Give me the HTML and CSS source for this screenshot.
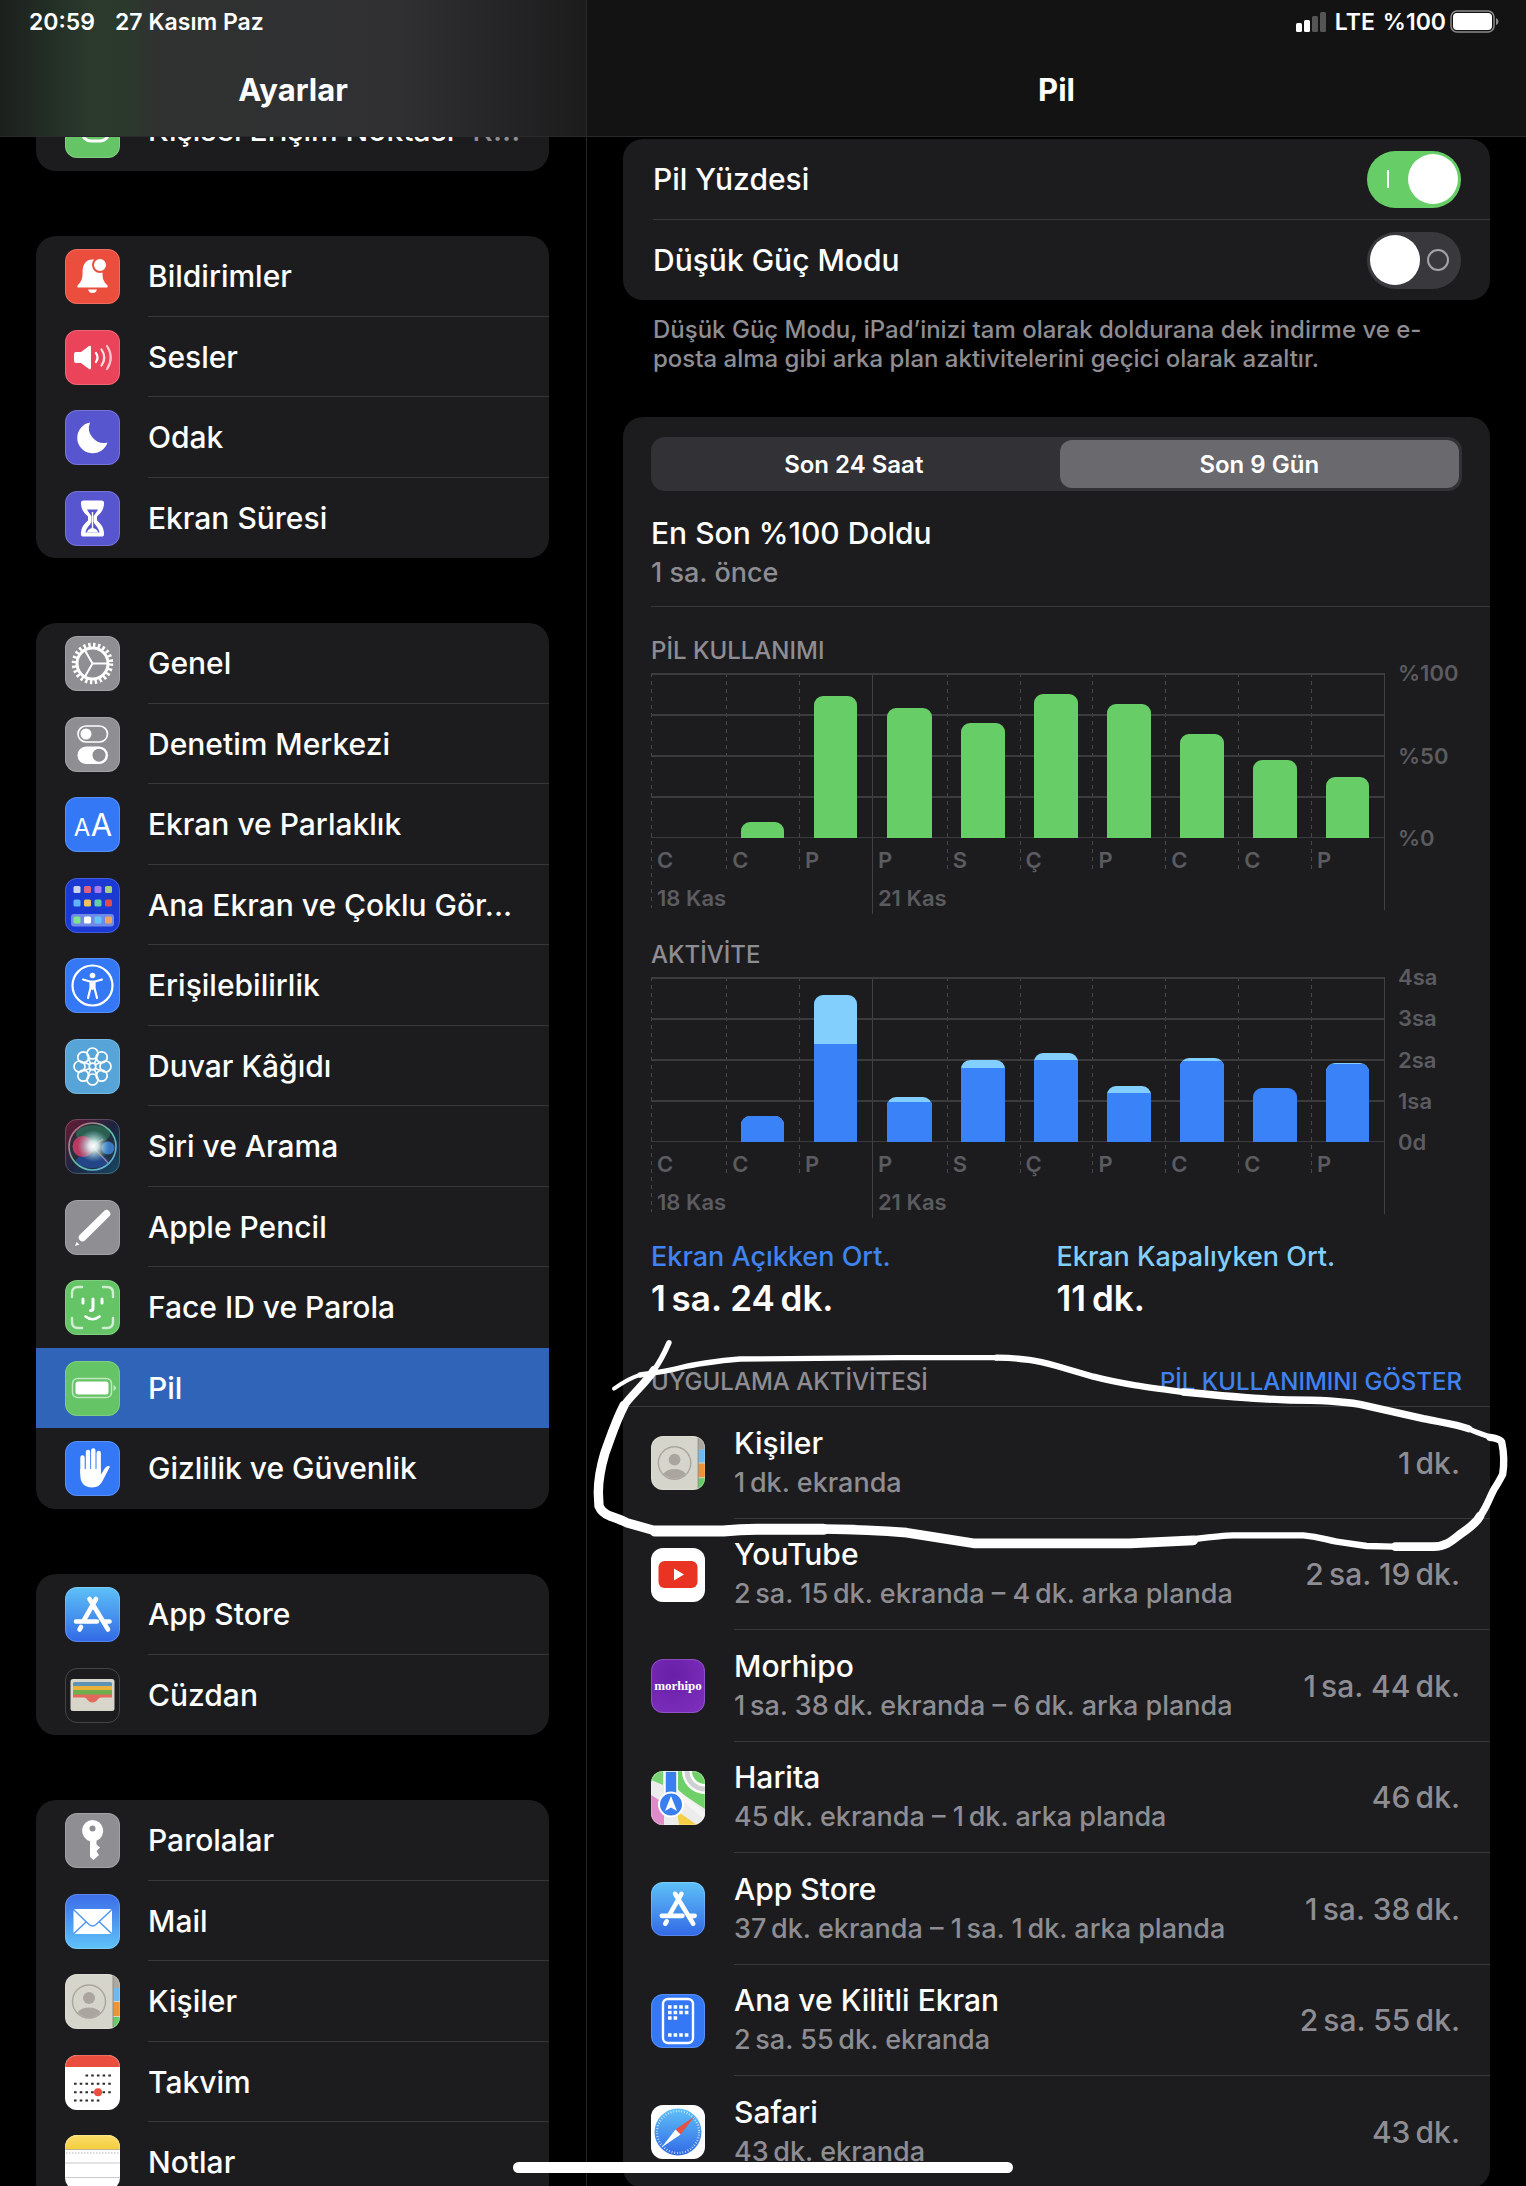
FILE: index.html
```html
<!DOCTYPE html>
<html lang="tr">

<head>
  <meta charset="utf-8">
  <title>Ayarlar</title>
  <link rel="stylesheet" href="styles.css">
</head>

<body>
  <!-- icons used more than once -->
  <svg class="defs" aria-hidden="true">
    <defs>
      <linearGradient id="storeBg" x1="0" y1="0" x2="0" y2="1">
        <stop offset="0" stop-color="#5ec1f7" />
        <stop offset="1" stop-color="#3269e6" />
      </linearGradient>
      <linearGradient id="mailBg" x1="0" y1="0" x2="0" y2="1">
        <stop offset="0" stop-color="#3c6ce8" />
        <stop offset="1" stop-color="#5fc3f8" />
      </linearGradient>
      <linearGradient id="notesBg" x1="0" y1="0" x2="0" y2="1">
        <stop offset="0" stop-color="#fade6b" />
        <stop offset="1" stop-color="#f5cd3f" />
      </linearGradient>
      <linearGradient id="siriBg" x1="0" y1="0" x2="1" y2="1">
        <stop offset="0" stop-color="#6b1b35" />
        <stop offset="0.5" stop-color="#1d2440" />
        <stop offset="1" stop-color="#174a63" />
      </linearGradient>
      <radialGradient id="siriGlow">
        <stop offset="0" stop-color="#fff" />
        <stop offset="0.3" stop-color="#e4f6f8" stop-opacity="0.9" />
        <stop offset="1" stop-color="#8fd0d8" stop-opacity="0" />
      </radialGradient>
      <linearGradient id="siriRing" x1="0" y1="0" x2="1" y2="1">
        <stop offset="0" stop-color="#e0527c" />
        <stop offset="0.5" stop-color="#63c29f" />
        <stop offset="1" stop-color="#5aa9f0" />
      </linearGradient>
    </defs>
    <symbol id="appstore" viewBox="0 0 55 55">
      <rect width="55" height="55" fill="url(#storeBg)" />
      <g stroke="#fff" stroke-width="4.6" stroke-linecap="round" fill="none">
        <path d="M31 12 18.500 34M24.500 12 43 42.500M11 34.500H32M39 34.500H44.500M16 40 14.500 42.500" />
      </g>
    </symbol>
    <symbol id="contacts" viewBox="0 0 55 55">
      <rect width="55" height="55" fill="#d6d5cb" />
      <rect x="48" width="7" height="14" fill="#aaa89f" />
      <rect x="48" y="14" width="7" height="13" fill="#6db9f0" />
      <rect x="48" y="28" width="7" height="14" fill="#ee9434" />
      <rect x="48" y="43" width="7" height="12" fill="#65cd63" />
      <path d="M48 0V55" stroke="#8f8d84" />
      <circle cx="24" cy="27.500" r="16.500" fill="none" stroke="#aaa69f" stroke-width="1.400" />
      <circle cx="24" cy="24" r="6" fill="#aaa69f" />
      <path d="M12.500 38.500C15 35 19 33.500 24 33.500S33 35 35.500 38.500C32 42 28 43.500 24 43.500S16 42 12.500 38.500z" fill="#aaa69f" />
    </symbol>
  </svg>

  <div class="settings">
    <aside class="sidebar">
      <header class="bar bar-left">
        <div class="status"><span>20:59</span><span>27 Kasım Paz</span></div>
        <h1>Ayarlar</h1>
      </header>

      <nav class="menu">
        <div class="card first">
          <a class="item" href="#hotspot">
            <svg class="icon green" viewBox="0 0 55 55"><g fill="none" stroke="#fff" stroke-width="3"><rect x="17" y="8" width="26" height="20" rx="9" /><rect x="17" y="18" width="27" height="20" rx="9" /></g></svg>
            <span class="label">Kişisel Erişim Noktası <span class="detail">K...</span></span>
          </a>
        </div>

        <div class="card">
          <a class="item" href="#notifications">
            <svg class="icon orange" viewBox="0 0 55 55"><path d="M12.500 36.500C16.500 32.500 17.500 30 17.500 24 17.500 15 21 10.500 27.500 10.500S37.500 15 37.500 24C37.500 30 38.500 32.500 42.500 36.500 43 38 42.500 38.500 41.500 38.500H13.500C12.500 38.500 12 38 12.500 36.500zM23 40.500H32Q31 44 27.500 44T23 40.500z" fill="#fff" /><circle cx="35" cy="16" r="7" fill="#fff" stroke="#eb4e3d" stroke-width="2" /></svg>
            <span class="label">Bildirimler</span>
          </a>
          <a class="item" href="#sounds">
            <svg class="icon pink" viewBox="0 0 55 55"><path d="M9 24q0-2 2-2h5l8-6q2-1 2 1v21q0 2-2 1l-8-6h-5q-2 0-2-2z" fill="#fff" /><g fill="none" stroke="#fff" stroke-width="2.200" stroke-linecap="round"><path d="M31 23q3 4.500 0 9" /><path d="M36.500 19.500q5.500 8 0 16" opacity=".85" /><path d="M42 16q7.500 11.500 0 23" opacity=".7" /></g></svg>
            <span class="label">Sesler</span>
          </a>
          <a class="item" href="#focus">
            <svg class="icon indigo" viewBox="0 0 55 55"><path d="M25 12.500A15.500 15.500 0 1 0 42.500 32.500 15 15 0 0 1 25 12.500z" fill="#fff" /></svg>
            <span class="label">Odak</span>
          </a>
          <a class="item" href="#screentime">
            <svg class="icon indigo" viewBox="0 0 55 55"><path d="M18.500 9.500h18q3 0 2.500 3.500c-.5 7-4 9.500-7 12.500v4c3 3 6.500 5.500 7 12.500q.5 3.500-2.500 3.500h-18q-3 0-2.500-3.500c.5-7 4-9.500 7-12.500v-4c-3-3-6.500-5.500-7-12.500q-.5-3.500 2.500-3.500z" fill="#fff" /><path d="M22 18.500h11c-1 2.500-3.500 4.500-4.500 7v5c1 3.500 5 5.500 6 11H20.500c1-5.500 5-7.500 6-11v-5c-1-2.500-3.500-4.500-4.500-7z" fill="#5856ce" /><path d="M26.800 21h1.400v16c2.500 1 4.500 2 5 4.500H21.800c.5-2.500 2.500-3.500 5-4.500z" fill="#fff" /></svg>
            <span class="label">Ekran Süresi</span>
          </a>
        </div>

        <div class="card">
          <a class="item" href="#general">
            <svg class="icon gray" viewBox="0 0 55 55"><g fill="none" stroke="#fff"><circle cx="27.500" cy="27.500" r="15.500" stroke-width="3" /><circle cx="27.500" cy="27.500" r="18.500" stroke-width="4.500" stroke-dasharray="2.400 2.443" /><path d="M27.500 27.500H42M27.500 27.500 20 14.500M27.500 27.500 20 40.500" stroke-width="2" /></g></svg>
            <span class="label">Genel</span>
          </a>
          <a class="item" href="#control">
            <svg class="icon gray" viewBox="0 0 55 55"><rect x="13" y="9" width="29.500" height="16" rx="8" fill="none" stroke="#fff" stroke-width="1.600" /><circle cx="21" cy="17" r="5.500" fill="#fff" /><rect x="12.500" y="29.500" width="30.500" height="17.500" rx="8.700" fill="#fff" /><circle cx="34" cy="38.200" r="6.500" fill="#8e8e93" /></svg>
            <span class="label">Denetim Merkezi</span>
          </a>
          <a class="item" href="#display">
            <svg class="icon blue" viewBox="0 0 55 55"><text class="glyph" x="17" y="39" font-size="24">A</text><text class="glyph" x="36.500" y="39" font-size="31">A</text></svg>
            <span class="label">Ekran ve Parlaklık</span>
          </a>
          <a class="item" href="#home">
            <svg class="icon royal" viewBox="0 0 55 55">
              <rect x="6" y="36" width="43" height="12.500" rx="3" fill="#6f8ae8" />
              <rect x="8.500" y="8" width="7" height="7" rx="1.500" fill="#cdd3e8" /><rect x="19" y="8" width="7" height="7" rx="1.500" fill="#e0607f" /><rect x="29.500" y="8" width="7" height="7" rx="1.500" fill="#a678f0" /><rect x="40" y="8" width="7" height="7" rx="1.500" fill="#a5d07a" />
              <rect x="8.500" y="21.500" width="7" height="7" rx="1.500" fill="#5db5f7" /><rect x="19" y="21.500" width="7" height="7" rx="1.500" fill="#efc25e" /><rect x="29.500" y="21.500" width="7" height="7" rx="1.500" fill="#62cfa5" /><rect x="40" y="21.500" width="7" height="7" rx="1.500" fill="#df4c4c" />
              <rect x="8.500" y="38.500" width="7" height="7" rx="1.500" fill="#7fe38c" /><rect x="19" y="38.500" width="7" height="7" rx="1.500" fill="#fff" /><rect x="29.500" y="38.500" width="7" height="7" rx="1.500" fill="#62c3fa" /><rect x="40" y="38.500" width="7" height="7" rx="1.500" fill="#f0a266" />
            </svg>
            <span class="label">Ana Ekran ve Çoklu Gör...</span>
          </a>
          <a class="item" href="#accessibility">
            <svg class="icon blue" viewBox="0 0 55 55"><circle cx="27.500" cy="27.500" r="20" fill="none" stroke="#fff" stroke-width="2.200" /><circle cx="27.500" cy="17.500" r="2.800" fill="#fff" /><path d="M18 21.500 25 23.500H30L37 21.500M27.500 24V31M25.500 24V30L23 40M29.500 24V30L32 40" fill="none" stroke="#fff" stroke-width="2.200" stroke-linecap="round" stroke-linejoin="round" /></svg>
            <span class="label">Erişilebilirlik</span>
          </a>
          <a class="item" href="#wallpaper">
            <svg class="icon sky" viewBox="0 0 55 55"><g fill="none" stroke="#fff" stroke-width="1.700"><circle cx="27.500" cy="14.500" r="5.500" /><circle cx="36.700" cy="18.300" r="5.500" /><circle cx="40.500" cy="27.500" r="5.500" /><circle cx="36.700" cy="36.700" r="5.500" /><circle cx="27.500" cy="40.500" r="5.500" /><circle cx="18.300" cy="36.700" r="5.500" /><circle cx="14.500" cy="27.500" r="5.500" /><circle cx="18.300" cy="18.300" r="5.500" /><path d="M25.500 24.500 23 18.500M29.500 24.500 32 18.500M30.500 25.500 36.500 23M30.500 29.500 36.500 32M29.500 30.500 32 36.500M25.500 30.500 23 36.500M24.500 29.500 18.500 32M24.500 25.500 18.500 23" /><circle cx="27.500" cy="27.500" r="3.300" /></g></svg>
            <span class="label">Duvar Kâğıdı</span>
          </a>
          <a class="item" href="#siri">
            <svg class="icon" viewBox="0 0 55 55"><rect width="55" height="55" fill="url(#siriBg)" /><circle cx="27.500" cy="27.500" r="23" fill="#27333b" opacity=".7" /><ellipse cx="28" cy="15" rx="17" ry="9" fill="#2d7a5c" opacity=".65" /><ellipse cx="27" cy="42" rx="16" ry="7" fill="#2450a8" opacity=".7" /><circle cx="18" cy="27.500" r="10.500" fill="#d23c68" opacity=".85" /><circle cx="43" cy="29" r="6.500" fill="#3b86d8" opacity=".85" /><path d="M28 28 44 45M28 27 38 20" stroke="#e9a9b4" stroke-width="1.200" opacity=".6" /><circle cx="28.500" cy="27" r="16" fill="url(#siriGlow)" /><circle cx="27.500" cy="27.500" r="23.500" fill="none" stroke="url(#siriRing)" stroke-width="1.600" /></svg>
            <span class="label">Siri ve Arama</span>
          </a>
          <a class="item" href="#pencil">
            <svg class="icon gray" viewBox="0 0 55 55"><path d="M17.500 37.500 41.500 13.800" stroke="#fff" stroke-width="7.500" stroke-linecap="round" /><path d="M11.500 42 14.500 44.500 10 46z" fill="#fff" /></svg>
            <span class="label">Apple Pencil</span>
          </a>
          <a class="item last" href="#faceid">
            <svg class="icon green" viewBox="0 0 55 55"><g fill="none" stroke="#fff" stroke-linecap="round"><path d="M7 17V13Q7 7 13 7H17M38 7H42Q48 7 48 13V17M48 38V42Q48 48 42 48H38M17 48H13Q7 48 7 42V38" stroke-width="2.400" opacity=".7" /><path d="M18 19V23M37 19V23M28 19V28.500Q28 30.500 25.500 30.500" stroke-width="3" /><path d="M20.500 36.500Q27.500 42 34.500 36.500" stroke-width="2.600" /></g></svg>
            <span class="label">Face ID ve Parola</span>
          </a>
          <a class="item selected" href="#battery" aria-current="page">
            <svg class="icon green" viewBox="0 0 55 55"><rect x="7.500" y="17.500" width="39" height="19" rx="5" fill="none" stroke="#fff" stroke-width="1.500" opacity=".6" /><rect x="10.500" y="20.500" width="33" height="13" rx="2.500" fill="#fff" /><path d="M48.500 24Q51 25 51 27T48.500 30z" fill="#fff" opacity=".6" /></svg>
            <span class="label">Pil</span>
          </a>
          <a class="item" href="#privacy">
            <svg class="icon blue" viewBox="0 0 55 55"><g stroke="#fff" stroke-width="4.400" stroke-linecap="round" fill="none"><path d="M17.500 16.500V32M23 11V30M28.300 9.500V30M33.700 12V30" /></g><path d="M15.300 28H35.900V33.500L40 27Q42.500 24 45 25.500L38 39Q35 46.500 27 46.500 15.300 46 15.300 34z" fill="#fff" /></svg>
            <span class="label">Gizlilik ve Güvenlik</span>
          </a>
        </div>

        <div class="card">
          <a class="item" href="#appstore-settings">
            <svg class="icon"><use href="#appstore" /></svg>
            <span class="label">App Store</span>
          </a>
          <a class="item" href="#wallet">
            <svg class="icon black" viewBox="0 0 55 55"><rect x="5.500" y="11" width="44" height="32" rx="2.500" fill="#d8d6cb" /><rect x="8" y="14" width="39" height="6" rx="1.500" fill="#5d94b5" /><rect x="8" y="18" width="39" height="5" fill="#e8b23d" /><rect x="8" y="22" width="39" height="5" fill="#6fae4c" /><path d="M8 26.500H47V29.500H36C33 29.500 32 34.500 27.500 34.500S22 29.500 19 29.500H8z" fill="#e2695c" /></svg>
            <span class="label">Cüzdan</span>
          </a>
        </div>

        <div class="card">
          <a class="item" href="#passwords">
            <svg class="icon gray" viewBox="0 0 55 55"><path d="M27.500 7A10.800 10.800 0 0 1 31.500 27.800V31.500L35 34.500 31.500 38 34 42 28.500 47 25 44V28.200A10.800 10.800 0 0 1 27.500 7z" fill="#fff" /><circle cx="27.500" cy="15.500" r="3" fill="#8e8e93" /></svg>
            <span class="label">Parolalar</span>
          </a>
          <a class="item" href="#mail">
            <svg class="icon" viewBox="0 0 55 55"><rect width="55" height="55" fill="url(#mailBg)" /><rect x="8.500" y="15" width="38.500" height="25" rx="2.500" fill="#fff" /><path d="M9 16 24 30.500Q27.500 33.500 31 30.500L46.500 16M9 39.500 21 28M46.500 39.500 34.500 28" fill="none" stroke="#4f97f0" stroke-width="1.500" /></svg>
            <span class="label">Mail</span>
          </a>
          <a class="item" href="#contacts-settings">
            <svg class="icon"><use href="#contacts" /></svg>
            <span class="label">Kişiler</span>
          </a>
          <a class="item" href="#calendar">
            <svg class="icon white" viewBox="0 0 55 55"><rect width="55" height="12" fill="#e94e3f" /><g stroke="#2b2b2b" stroke-width="2" stroke-dasharray="2.600 3.100"><path d="M20.500 20.500H46.500M9 28.800H46.500M9 37.200H46.500M9 45.500H35" /></g><circle cx="33" cy="37.200" r="4" fill="#e94e3f" /></svg>
            <span class="label">Takvim</span>
          </a>
          <a class="item" href="#notes">
            <svg class="icon white" viewBox="0 0 55 55"><rect width="55" height="14" fill="url(#notesBg)" /><path d="M0 14.500H55" stroke="#c0b68d" /><path d="M1 18H55" stroke="#b5b5b5" stroke-dasharray="1.500 1.500" /><path d="M0 28H55M0 42.500H55" stroke="#c9c9c9" /></svg>
            <span class="label">Notlar</span>
          </a>
        </div>
      </nav>
    </aside>

    <main class="pane">
      <header class="bar bar-right">
        <div class="status status-right">
          <svg class="signal" viewBox="0 0 31 20" aria-hidden="true"><g fill="#fff"><rect y="11" width="6" height="9" rx="1.500" /><rect x="8" y="8" width="6" height="12" rx="1.500" /><g opacity=".28"><rect x="16" y="4" width="6" height="16" rx="1.500" /><rect x="24" width="6" height="20" rx="1.500" /></g></g></svg>
          <span>LTE</span>
          <span>%100</span>
          <svg class="cell" viewBox="0 0 49 23" aria-hidden="true"><rect x="1" y="1" width="43" height="21" rx="6" fill="none" stroke="#8c8c8c" stroke-width="1.500" /><rect x="3" y="3" width="39" height="17" rx="4" fill="#fff" /><path d="M46 8Q48.500 9 48.500 11.500T46 15z" fill="#8c8c8c" /></svg>
        </div>
        <h2>Pil</h2>
      </header>

      <div class="content">
        <section class="card">
          <div class="toggle-row">
            <label for="percentage">Pil Yüzdesi</label>
            <input type="checkbox" class="switch" id="percentage" checked>
          </div>
          <div class="toggle-row">
            <label for="lowpower">Düşük Güç Modu</label>
            <input type="checkbox" class="switch" id="lowpower">
          </div>
        </section>
        <p class="footnote">Düşük Güç Modu, iPad’inizi tam olarak doldurana dek indirme ve e-<br>posta alma gibi arka plan aktivitelerini geçici olarak azaltır.</p>

        <section class="card usage">
          <div class="segmented">
            <button type="button">Son 24 Saat</button>
            <button type="button" class="active">Son 9 Gün</button>
          </div>

          <div class="charged">
            <p class="title">En Son %100 Doldu</p>
            <p class="sub">1 sa. önce</p>
          </div>

          <h3 class="caption">PİL KULLANIMI</h3>
          <div class="chart">
            <div class="days">
              <div class="day tall"><div class="plot"></div><span>C</span><span>18 Kas</span></div>
              <div class="day"><div class="plot"><div class="level" style="height: 10%"></div></div><span>C</span></div>
              <div class="day"><div class="plot"><div class="level" style="height: 86%"></div></div><span>P</span></div>
              <div class="day week"><div class="plot"><div class="level" style="height: 79%"></div></div><span>P</span><span>21 Kas</span></div>
              <div class="day"><div class="plot"><div class="level" style="height: 70%"></div></div><span>S</span></div>
              <div class="day"><div class="plot"><div class="level" style="height: 87%"></div></div><span>Ç</span></div>
              <div class="day"><div class="plot"><div class="level" style="height: 81%"></div></div><span>P</span></div>
              <div class="day"><div class="plot"><div class="level" style="height: 63%"></div></div><span>C</span></div>
              <div class="day"><div class="plot"><div class="level" style="height: 47%"></div></div><span>C</span></div>
              <div class="day"><div class="plot"><div class="level" style="height: 37%"></div></div><span>P</span></div>
            </div>
            <div class="axis"><span>%100</span><span>%50</span><span>%0</span></div>
          </div>

          <h3 class="caption">AKTİVİTE</h3>
          <div class="chart">
            <div class="days">
              <div class="day tall"><div class="plot"></div><span>C</span><span>18 Kas</span></div>
              <div class="day"><div class="plot"><div class="level activity" style="height: 16%"><div class="on" style="height: 97%"></div></div></div><span>C</span></div>
              <div class="day"><div class="plot"><div class="level activity" style="height: 89%"><div class="on" style="height: 67%"></div></div></div><span>P</span></div>
              <div class="day week"><div class="plot"><div class="level activity" style="height: 27%"><div class="on" style="height: 90%"></div></div></div><span>P</span><span>21 Kas</span></div>
              <div class="day"><div class="plot"><div class="level activity" style="height: 50%"><div class="on" style="height: 90%"></div></div></div><span>S</span></div>
              <div class="day"><div class="plot"><div class="level activity" style="height: 54%"><div class="on" style="height: 92%"></div></div></div><span>Ç</span></div>
              <div class="day"><div class="plot"><div class="level activity" style="height: 34%"><div class="on" style="height: 87%"></div></div></div><span>P</span></div>
              <div class="day"><div class="plot"><div class="level activity" style="height: 51%"><div class="on" style="height: 96%"></div></div></div><span>C</span></div>
              <div class="day"><div class="plot"><div class="level activity" style="height: 33%"><div class="on" style="height: 100%"></div></div></div><span>C</span></div>
              <div class="day"><div class="plot"><div class="level activity" style="height: 48%"><div class="on" style="height: 98%"></div></div></div><span>P</span></div>
            </div>
            <div class="axis"><span>4sa</span><span>3sa</span><span>2sa</span><span>1sa</span><span>0d</span></div>
          </div>

          <div class="averages">
            <div>
              <p class="on-label">Ekran Açıkken Ort.</p>
              <p class="average">1&#8201;sa. 24&#8201;dk.</p>
            </div>
            <div>
              <p class="off-label">Ekran Kapalıyken Ort.</p>
              <p class="average">11&#8201;dk.</p>
            </div>
          </div>

          <div class="apps">
            <div class="apps-head">
              <h3 class="caption">UYGULAMA AKTİVİTESİ</h3>
              <button type="button">PİL KULLANIMINI GÖSTER</button>
            </div>
            <ul>
              <li>
                <svg class="icon"><use href="#contacts" /></svg>
                <div class="app">
                  <div><p class="title">Kişiler</p><p class="sub">1&#8201;dk. ekranda</p></div>
                  <span class="time">1&#8201;dk.</span>
                </div>
              </li>
              <li>
                <svg class="icon white" viewBox="0 0 54 54"><rect x="7.500" y="13" width="39" height="27" rx="6" fill="#e93323" /><path d="M23 20.500V32.500L33 26.500z" fill="#fff" /></svg>
                <div class="app">
                  <div><p class="title">YouTube</p><p class="sub">2&#8201;sa. 15&#8201;dk. ekranda – 4&#8201;dk. arka planda</p></div>
                  <span class="time">2&#8201;sa. 19&#8201;dk.</span>
                </div>
              </li>
              <li>
                <svg class="icon purple" viewBox="0 0 54 54"><text class="morhipo" x="27" y="31">morhipo</text></svg>
                <div class="app">
                  <div><p class="title">Morhipo</p><p class="sub">1&#8201;sa. 38&#8201;dk. ekranda – 6&#8201;dk. arka planda</p></div>
                  <span class="time">1&#8201;sa. 44&#8201;dk.</span>
                </div>
              </li>
              <li>
                <svg class="icon" viewBox="0 0 54 54"><rect width="54" height="54" fill="#ececec" /><path d="M0 0H12V14L0 9z" fill="#78d672" /><path d="M0 24 13 32V54H0z" fill="#e08bc9" /><path d="M27 0H54V38L27 20z" fill="#6fd068" /><path d="M25 17 54 42V49L22 22z" fill="#f4f4f4" /><path d="M26 40 46 54H28z" fill="#f6cf46" /><path d="M36 0A18 18 0 0 0 54 18" fill="none" stroke="#fff" stroke-width="10" /><path d="M36 0A18 18 0 0 0 54 18" fill="none" stroke="#cfd0d2" stroke-width="5" /><path d="M14 0H26V28H14z" fill="#3a7ff0" stroke="#fff" stroke-width="1.500" /><circle cx="20" cy="33.500" r="12" fill="#3a7ff0" stroke="#fff" stroke-width="2" /><path d="M20 25 26 40 20 36.500 14 40z" fill="#fff" /></svg>
                <div class="app">
                  <div><p class="title">Harita</p><p class="sub">45&#8201;dk. ekranda – 1&#8201;dk. arka planda</p></div>
                  <span class="time">46&#8201;dk.</span>
                </div>
              </li>
              <li>
                <svg class="icon"><use href="#appstore" /></svg>
                <div class="app">
                  <div><p class="title">App Store</p><p class="sub">37&#8201;dk. ekranda – 1&#8201;sa. 1&#8201;dk. arka planda</p></div>
                  <span class="time">1&#8201;sa. 38&#8201;dk.</span>
                </div>
              </li>
              <li>
                <svg class="icon blue" viewBox="0 0 54 54"><rect x="12" y="5" width="30" height="44" rx="5" fill="none" stroke="#fff" stroke-width="2.400" /><g stroke="#fff" stroke-width="3.600" stroke-dasharray="3.600 2"><path d="M17 13H38M17 18.500H38M17 24H27M17 41H38" /></g></svg>
                <div class="app">
                  <div><p class="title">Ana ve Kilitli Ekran</p><p class="sub">2&#8201;sa. 55&#8201;dk. ekranda</p></div>
                  <span class="time">2&#8201;sa. 55&#8201;dk.</span>
                </div>
              </li>
              <li>
                <svg class="icon white" viewBox="0 0 54 54"><circle cx="27" cy="27" r="23.500" fill="url(#storeBg)" /><circle cx="27" cy="27" r="21" fill="none" stroke="#d6ecfb" stroke-width="2.200" stroke-dasharray=".8 1.949" /><path d="M43.500 11.500 29.500 29.500 24.500 24.500z" fill="#e8503f" /><path d="M10.500 42.500 24.500 24.500 29.500 29.500z" fill="#fff" /></svg>
                <div class="app">
                  <div><p class="title">Safari</p><p class="sub">43&#8201;dk. ekranda</p></div>
                  <span class="time">43&#8201;dk.</span>
                </div>
              </li>
            </ul>

            <!-- pen mark around the first app -->
            <svg class="pen" viewBox="0 0 2790 675" aria-hidden="true">
              <g fill="none" stroke="#fff" stroke-linecap="round" stroke-linejoin="round">
                <path stroke-width="16" d="M237 20C222 55 205 85 190 105" />
                <path stroke-width="24" d="M192 102C165 145 120 180 100 212" />
                <path stroke-width="28" d="M102 208C75 260 60 310 45 350 30 400 25 440 25 470L27 510Q35 530 60 540 95 552 110 560L195 584" />
                <path stroke-width="33" d="M195 585H400Q450 580 500 580H700" />
                <path stroke-width="29" d="M700 579C800 580 880 584 950 590L1150 622H1620L1810 613" />
                <path stroke-width="19" d="M1815 609Q1900 598 1930 598H2140C2190 602 2210 612 2240 617L2330 630 2410 632" />
                <path stroke-width="26" d="M2416 632H2530C2570 630 2585 615 2610 595 2640 575 2660 560 2670 540" />
                <path stroke-width="22" d="M2670 540C2690 515 2700 480 2715 455Q2725 440 2738 415C2742 390 2742 350 2735 318Q2730 308 2700 304" />
                <path stroke-width="16" d="M2705 304Q2660 290 2640 280" />
                <path stroke-width="22" d="M2635 278C2600 265 2560 260 2500 248L2310 205C2250 195 2200 192 2100 192 2000 190 1900 180 1780 168" />
                <path stroke-width="19" d="M1780 168C1680 155 1600 145 1510 122L1400 90C1340 74 1300 66 1220 65" />
                <path stroke-width="16" d="M1220 65H930L450 69C380 74 300 88 280 93 240 104 215 108 150 117" />
                <path stroke-width="12" d="M150 117C120 125 95 142 72 158" />
              </g>
            </svg>
          </div>
        </section>
      </div>
    </main>
  </div>

  <div class="home-indicator"></div>
</body>

</html>
```
FILE: styles.css
```css
* {
  box-sizing: border-box;
}

body {
  margin: 0;
  background: #000;
  color: #fff;
  font-family: Inter, "Liberation Sans", sans-serif;
  font-weight: 500;
  font-size: 30px;
}

h1,
h2,
h3,
p,
ul {
  margin: 0;
  padding: 0;
}

button {
  border: none;
  padding: 0;
  background: none;
  color: inherit;
  font: inherit;
}

.defs {
  position: absolute;
  width: 0;
  height: 0;
}

.settings {
  display: grid;
  grid-template-columns: 587px 1fr;
  height: 100vh;
  overflow: hidden;
}

.sidebar,
.pane {
  position: relative;
  overflow: hidden;
}

.sidebar {
  border-right: 1px solid #262628;
}

.bar {
  position: absolute;
  top: 0;
  left: 0;
  right: 0;
  z-index: 1;
  height: 137px;
  border-bottom: 1px solid #29292b;
}

.bar-left {
  background: linear-gradient(90deg, #1d1f1e 0, #212d24 45px, #2b3a2d 90px, #2b392d 125px, #2f3231 155px, #303032 400px, #1c1c1d 586px);
}

.bar-right {
  background: #131313;
}

.bar h1,
.bar h2 {
  font-size: 31px;
  line-height: 40px;
  font-weight: 700;
  text-align: center;
  margin-top: 27px;
}

.status {
  display: flex;
  align-items: center;
  gap: 20px;
  height: 43px;
  padding: 0 29px;
  font-size: 23px;
  font-weight: 600;
}

.status-right {
  justify-content: flex-end;
  gap: 8px;
  padding-right: 27px;
}

.signal {
  width: 31px;
  height: 20px;
}

.cell {
  width: 49px;
  height: 23px;
  margin-left: -4px;
}

.card {
  background: #1c1c1e;
  border-radius: 20px;
}

/* left list */

.menu {
  display: flex;
  flex-direction: column;
  gap: 65px;
  padding: 90px 37px 0 36px;
}

.item {
  display: flex;
  align-items: center;
  gap: 28px;
  height: 80px;
  padding-left: 29px;
  color: #fff;
  text-decoration: none;
}

.item:nth-child(odd) {
  height: 81px;
}

.label {
  flex: 1;
  display: flex;
  align-items: center;
  gap: 18px;
  height: 100%;
  border-bottom: 1px solid #38383a;
  white-space: nowrap;
}

.item:last-child .label,
.item.last .label,
.item.selected .label {
  border-color: transparent;
}

.item.selected {
  background: #2f64b8;
}

.detail {
  color: #8d8d93;
}

.icon {
  flex: none;
  width: 55px;
  height: 55px;
  border-radius: 12px;
  outline: 1px solid rgba(255, 255, 255, 0.18);
  outline-offset: -1px;
}

.green { background: #65c466; }
.orange { background: #eb4e3d; }
.pink { background: #eb445a; }
.indigo { background: #5856ce; }
.gray { background: #8e8e93; }
.blue { background: #3478f6; }
.royal { background: #1a3ad3; }
.sky { background: #57a5d8; }
.black { background: #1c1c1e; }
.white { background: #fff; }
.purple { background: radial-gradient(circle at 40% 30%, #6a1fa8, #7d31bd); }

.glyph {
  fill: #fff;
  font-weight: 400;
  text-anchor: middle;
}

.morhipo {
  fill: #fff;
  font-family: "Liberation Serif", serif;
  font-size: 13px;
  font-weight: 700;
  text-anchor: middle;
}

/* right pane */

.content {
  padding: 139px 36px 0;
}

.toggle-row {
  display: flex;
  align-items: center;
  justify-content: space-between;
  height: 80px;
  margin-left: 30px;
  padding-right: 29px;
}

.toggle-row + .toggle-row {
  height: 81px;
  border-top: 1px solid #38383a;
}

.switch {
  appearance: none;
  display: flex;
  align-items: center;
  justify-content: space-between;
  width: 94px;
  height: 57px;
  margin: 0;
  padding: 0 3px;
  border-radius: 29px;
  background: #39393d;
}

.switch::before {
  content: "";
  width: 50px;
  height: 50px;
  border-radius: 50%;
  background: #fff;
}

.switch::after {
  content: "";
  width: 18px;
  height: 18px;
  margin-right: 9px;
  border: 2px solid #a5a5a8;
  border-radius: 50%;
}

.switch:checked {
  flex-direction: row-reverse;
  background: #67ce67;
}

.switch:checked::after {
  width: 2px;
  margin: 0 0 0 17px;
  border: none;
  border-radius: 0;
  background: #fff;
}

.footnote {
  padding: 15px 30px 0;
  color: #8d8d93;
  font-size: 24px;
  line-height: 29px;
}

.usage {
  margin-top: 44px;
  padding: 20px 0 0 28px;
}

.segmented {
  display: grid;
  grid-template-columns: 1fr 1fr;
  gap: 6px;
  height: 54px;
  margin-right: 28px;
  padding: 3px;
  border-radius: 14px;
  background: #313136;
}

.segmented button {
  border-radius: 12px;
  font-size: 24px;
  font-weight: 600;
}

.segmented .active {
  background: #69696e;
}

.title,
.sub {
  line-height: 40px;
}

.sub {
  color: #8d8d93;
  font-size: 27px;
}

.charged {
  margin: 22px 0 29px;
  padding-bottom: 13px;
  border-bottom: 1px solid #38383a;
}

.caption {
  color: #8d8d93;
  font-size: 24px;
  font-weight: 500;
  line-height: 30px;
}

/* charts */

.chart {
  display: flex;
  margin: 7px 28px 25px 0;
}

.chart + .caption {
  margin-top: 30px;
}

.days {
  flex: 1;
  display: grid;
  grid-template-columns: repeat(10, 1fr);
  height: 237px;
  border-right: 1px solid #414144;
}

.day {
  background: repeating-linear-gradient(#48484b 0 4px, transparent 4px 8px) 0 0 / 1px 198px no-repeat;
  white-space: nowrap;
}

.day.tall {
  background-size: 1px 235px;
}

.day.week {
  background: linear-gradient(#414144, #414144) 0 0 / 1px 100% no-repeat;
}

.day span {
  display: block;
  padding: 6px 0 0 6px;
  color: #5b5b60;
  font-size: 22px;
  font-weight: 600;
  line-height: 32px;
}

.plot {
  display: flex;
  align-items: flex-end;
  justify-content: center;
  height: 165px;
  background: linear-gradient(#3b3b3e 2px, transparent 2px) 0 0 / 100% 41px;
}

.level {
  width: 60%;
  border-radius: 9px 9px 0 0;
  background: #67ce67;
}

.activity {
  display: flex;
  flex-direction: column;
  justify-content: flex-end;
  overflow: hidden;
  background: #82cffd;
}

.on {
  background: #3a82f7;
}

.axis {
  display: flex;
  flex-direction: column;
  justify-content: space-between;
  width: 77px;
  height: 187px;
  margin-top: -11px;
  padding-left: 13px;
  color: #5b5b60;
  font-size: 22px;
  font-weight: 600;
  line-height: 22px;
}

.averages {
  display: grid;
  grid-template-columns: 1fr 1fr;
  margin: 0 28px 46px 0;
  font-size: 27px;
  line-height: 36px;
}

.on-label {
  color: #3f82f0;
}

.off-label {
  color: #82cffd;
}

.average {
  font-size: 35px;
  font-weight: 600;
  line-height: 46px;
}

/* per app list */

.apps {
  position: relative;
}

.apps-head {
  display: flex;
  justify-content: space-between;
  margin-left: -28px;
  padding: 0 28px 9px;
  border-bottom: 1px solid #38383a;
}

.apps-head button {
  color: #3f82f0;
  font-size: 24px;
  line-height: 30px;
}

.apps ul {
  list-style-type: none;
}

.apps li {
  display: flex;
  align-items: center;
  gap: 29px;
  height: 112px;
}

.apps li:nth-child(even) {
  height: 111px;
}

.apps .icon {
  width: 54px;
  height: 54px;
}

.app {
  flex: 1;
  display: flex;
  align-items: center;
  justify-content: space-between;
  height: 100%;
  padding-right: 30px;
  border-bottom: 1px solid #38383a;
}

.time {
  color: #8d8d93;
}

.pen {
  position: absolute;
  top: -31px;
  left: -61px;
  width: 930px;
  height: 225px;
}

.home-indicator {
  position: fixed;
  bottom: 13px;
  left: 0;
  right: 0;
  width: 500px;
  height: 11px;
  margin: 0 auto;
  border-radius: 6px;
  background: #fff;
}
```
